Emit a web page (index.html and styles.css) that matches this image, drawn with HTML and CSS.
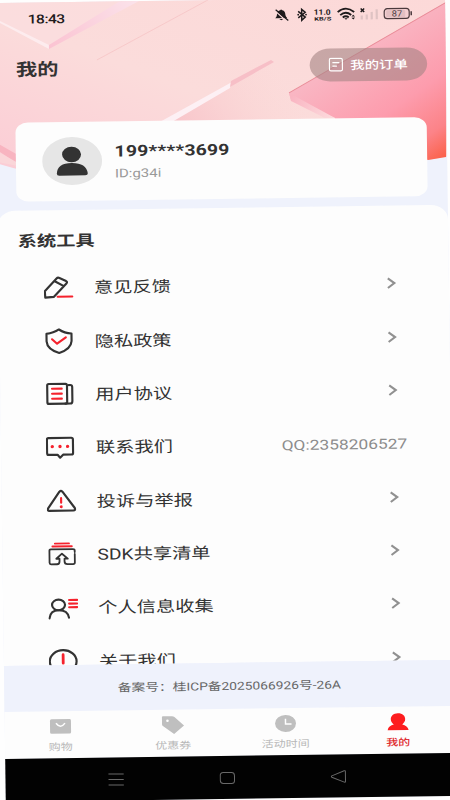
FILE: index.html
```html
<!DOCTYPE html>
<html lang="zh-CN">
<head>
<meta charset="utf-8">
<title>我的</title>
<link rel="stylesheet" href="styles.css">
</head>
<body>
<div class="screen">
  <svg class="art" viewBox="0 0 360 166" preserveAspectRatio="none" aria-hidden="true">
    <defs>
      <linearGradient id="base" x1="0" y1="1" x2="1" y2="0"><stop offset="0" stop-color="#fbccd5"/><stop offset=".45" stop-color="#fbdcdb"/><stop offset="1" stop-color="#fcd9d8"/></linearGradient>
      <linearGradient id="wedge" gradientUnits="userSpaceOnUse" x1="355" y1="50" x2="435" y2="165"><stop offset="0" stop-color="#f9b6c3"/><stop offset=".5" stop-color="#fd9cad"/><stop offset=".8" stop-color="#fc8388"/><stop offset="1" stop-color="#fb6048"/></linearGradient>
      <linearGradient id="fold" gradientUnits="userSpaceOnUse" x1="180" y1="125" x2="275" y2="65"><stop offset="0" stop-color="#f8c6cb"/><stop offset="1" stop-color="#fbd5d4" stop-opacity="0"/></linearGradient>
      <linearGradient id="ray" gradientUnits="userSpaceOnUse" x1="49" y1="47" x2="135" y2="0"><stop offset="0" stop-color="#fbc3d2"/><stop offset="1" stop-color="#fbe2ea"/></linearGradient>
      <linearGradient id="edge" gradientUnits="userSpaceOnUse" x1="291" y1="98" x2="335" y2="118"><stop offset="0" stop-color="#f9b5c2"/><stop offset="1" stop-color="#fddcde"/></linearGradient>
    </defs>
    <g transform="matrix(.8 .0135 -.0108 1 4 -3)">
      <path d="M-8 0H450V156L428 160L330 170H20L-8 162Z" fill="url(#base)"/>
      <path d="M0 22L49 47L125 0H-5Z" fill="#fcdedf" opacity=".6"/>
      <path d="M0 21L49 45V49L0 23Z" fill="#fdecee"/>
      <path d="M49 45L120 1H139L49 49Z" fill="url(#ray)"/>
      <path d="M97 60L208 0" stroke="#f6c4c5" stroke-width=".8"/>
      <path d="M172 121L230 87L271 62L300 62L289 93L335 119V125H170Z" fill="url(#fold)"/>
      <path d="M158 123L232 82L230 88L172 122Z" fill="#fdf0f4"/>
      <path d="M231 81L271 60L274 62L230 87Z" fill="#f7bfc7"/>
      <path d="M289 93L446 2V157L428 160L335 125V118L291 100Z" fill="url(#wedge)"/>
      <path d="M289 93L335 118H325L291 101Z" fill="url(#edge)"/>
      <path d="M289 93L446 2.500" stroke="#e98b97" stroke-width="1"/>
      <path d="M-3 143L18 155V164L-3 150Z" fill="#f8b4c0"/>
      <path d="M-3 151L18 163V166L-3 162Z" fill="#fad6d9"/>
    </g>
  </svg>

  <div class="status">
    <span class="clock">18:43</span>
    <svg class="status-icons" viewBox="0 0 145 22" preserveAspectRatio="none">
      <g fill="#1f1b1c">
        <path d="M5 15C7 13.500 6.500 11.500 7 10C7.500 8 9 7.500 10 7.200Q11 5.800 12 7.200C13.500 7.500 14.800 8.500 15 10.500C15.200 12.500 15.500 13.500 17 15ZM9 15.800H13L11 17.200Z"/>
        <path d="M5.500 8L15.500 17.500" stroke="#fadada" stroke-width="1.200"/>
        <path d="M5.500 6.500L18 17.500" stroke="#1f1b1c" stroke-width="1.300"/>
        <path d="M28 8.500L35 14.300L31.500 17.500V6.500L35 9.500L28 15" fill="none" stroke="#1f1b1c" stroke-width="1.500"/>
        <circle cx="28" cy="11.800" r=".9"/><circle cx="35.800" cy="11.800" r=".9"/>
        <text class="speed" x="43.500" y="12.200" textLength="17" lengthAdjust="spacingAndGlyphs">11.0</text>
        <text class="unit" x="44" y="18" textLength="17" lengthAdjust="spacingAndGlyphs">KB/S</text>
        <path d="M67.500 9.800Q75.500 3 84 9.800M70 12.800Q75.500 8.300 81 12.800M72.500 15.200Q75.500 13 78.500 15.200" fill="none" stroke="#1f1b1c" stroke-width="1.900"/>
        <path d="M74 16H77.500L75.700 17.500ZM81.200 14.300L83 12.500L84.800 14.300ZM81.200 15.500L83 17.300L84.800 15.500Z"/>
        <path d="M90.500 6.500L94 10M94 6.500L90.500 10" stroke="#1f1b1c" stroke-width="1.500"/>
      </g>
      <path d="M91.500 13.500V17.500M96.500 12.500V17.500M101.500 10V17.500M106.500 7.500V17.500" stroke="#dfc3c3" stroke-width="2.200"/>
      <rect x="114" y="7" width="25" height="10" rx="3" fill="#f4cfd1" stroke="#4b3a3d" stroke-width="1.200"/>
      <rect x="116" y="8.500" width="19" height="7" rx="1" fill="#e3bfc2"/>
      <path d="M141 10V14" stroke="#4b3a3d" stroke-width="1.500"/>
      <text class="charge" x="121.500" y="15" textLength="10.500" lengthAdjust="spacingAndGlyphs">87</text>
    </svg>
  </div>

  <header class="title-row">
    <h1>我的</h1>
    <a class="orders">
      <svg class="orders-icon" viewBox="0 0 15 15" preserveAspectRatio="none"><rect x="1" y="1" width="13" height="12.500" rx="1.500"/><path d="M4 5.200H11M4 8.800H8.500"/></svg>
      <span>我的订单</span>
    </a>
  </header>

  <section class="profile">
    <svg class="avatar" viewBox="0 0 60 48" preserveAspectRatio="none"><ellipse cx="30" cy="24" rx="30" ry="24" fill="#e6e6e6"/><ellipse cx="29.500" cy="17.500" rx="9.500" ry="7.800" fill="#333"/><path d="M14.500 36.500Q15 26 29.500 26T45.500 36.500Q45.500 38.500 43 38.500H17Q14.500 38.500 14.500 36.500Z" fill="#333"/></svg>
    <div class="who">
      <strong>199****3699</strong>
      <span>ID:g34i</span>
    </div>
  </section>

  <main class="panel">
    <h2>系统工具</h2>
    <ul>
      <li><svg class="icon" viewBox="0 0 30 30" preserveAspectRatio="none"><path d="M1.300 24.300L.9 17.800L12.800 5.300Q14 4 15.700 4.800L22.300 8Q24 9 22.600 10.400L10 23.600ZM11 8L20 13"/><path class="red" d="M13.700 23.500H28.300"/></svg><span class="label">意见反馈</span><svg class="chev" viewBox="0 0 10 13" preserveAspectRatio="none"><path d="M1.500 1.700L8 6.500L1.500 11.300"/></svg></li>
      <li><svg class="icon" viewBox="0 0 30 30" preserveAspectRatio="none"><path d="M14.500 3.300Q20 7 27 7.500V15Q26.500 23 14.500 26.800Q2.500 23 2 15V7.500Q9 7 14.500 3.300Z"/><path class="red" d="M7.500 13L12.500 17.500L21.300 11.400"/></svg><span class="label">隐私政策</span><svg class="chev" viewBox="0 0 10 13" preserveAspectRatio="none"><path d="M1.500 1.700L8 6.500L1.500 11.300"/></svg></li>
      <li><svg class="icon" viewBox="0 0 30 30" preserveAspectRatio="none"><path d="M23.500 6H25Q27 6 27 8V22Q27 24.500 25 24.500H20"/><rect x="2" y="4.700" width="19.800" height="19.800" rx="1.500"/><path class="red" d="M6.800 9.500H16.500M6.800 14.500H16.500M6.800 19.500H16.500"/></svg><span class="label">用户协议</span><svg class="chev" viewBox="0 0 10 13" preserveAspectRatio="none"><path d="M1.500 1.700L8 6.500L1.500 11.300"/></svg></li>
      <li><svg class="icon" viewBox="0 0 30 30" preserveAspectRatio="none"><path d="M2.500 4.700H25.300Q27 4.700 27 6.200V20Q27 21.500 25.300 21.500H17L14 24.500L11.500 21.500H2.500Q1 21.500 1 20V6.200Q1 4.700 2.500 4.700Z"/><g class="dots"><circle cx="6.300" cy="13.300" r="1.700"/><circle cx="14" cy="13.300" r="1.700"/><circle cx="21.600" cy="13.300" r="1.700"/></g></svg><span class="label">联系我们</span><span class="value">QQ:2358206527</span></li>
      <li><svg class="icon" viewBox="0 0 30 30" preserveAspectRatio="none"><path d="M12.800 5.500Q14.300 4 15.800 5.500L28 22Q28.800 24.500 26.500 24.500H2.500Q.3 24.500 1.300 22Z"/><path class="red" d="M14.400 12V16.500"/><g class="dots"><circle cx="14.400" cy="20.600" r="1.500"/></g></svg><span class="label">投诉与举报</span><svg class="chev" viewBox="0 0 10 13" preserveAspectRatio="none"><path d="M1.500 1.700L8 6.500L1.500 11.300"/></svg></li>
      <li><svg class="icon" viewBox="0 0 30 30" preserveAspectRatio="none"><path class="thin" d="M27.300 13V11.500Q27.300 10 25.500 10H3.500Q2 10 2 11.500V23.500Q2 25 3.500 25H9.500Q12 25 12 22V19.500H8.800L14.500 14.500L20.300 19.500H17V22Q17 25 20 25H25.500Q27.300 25 27.300 23.500V15"/><path class="red thin" d="M7.500 4.300H21.700M5 7.200H24.500"/></svg><span class="label">SDK共享清单</span><svg class="chev" viewBox="0 0 10 13" preserveAspectRatio="none"><path d="M1.500 1.700L8 6.500L1.500 11.300"/></svg></li>
      <li><svg class="icon" viewBox="0 0 30 30" preserveAspectRatio="none"><ellipse cx="10.400" cy="11.700" rx="6.500" ry="5.300"/><path d="M1.200 25Q2 17 10.700 17T20.700 24.500"/><path class="red" d="M21 6.900H29M21 10.500H29M21 14.100H29"/></svg><span class="label">个人信息收集</span><svg class="chev" viewBox="0 0 10 13" preserveAspectRatio="none"><path d="M1.500 1.700L8 6.500L1.500 11.300"/></svg></li>
      <li><svg class="icon" viewBox="0 0 30 30" preserveAspectRatio="none"><ellipse cx="14.300" cy="15.200" rx="13.400" ry="11.200"/><path class="red wide" d="M14.300 8.500V17"/></svg><span class="label">关于我们</span><svg class="chev" viewBox="0 0 10 13" preserveAspectRatio="none"><path d="M1.500 1.700L8 6.500L1.500 11.300"/></svg></li>
    </ul>
  </main>

  <footer class="record">备案号：桂ICP备2025066926号-26A</footer>

  <nav class="tabs">
    <a><svg viewBox="0 0 24 20" preserveAspectRatio="none"><rect x="1.500" y="3" width="21" height="14.500" rx="1.500"/><path class="line" d="M7.500 7Q12 13 16.500 7"/></svg><span>购物</span></a>
    <a><svg viewBox="0 0 24 20" preserveAspectRatio="none"><path d="M1 2.500Q1 1.500 2 1.500H11Q12.500 1.500 13.500 2.200L23 11L13 19.200L1.500 10.800Q1 10.400 1 9.500Z"/><circle cx="6.500" cy="6" r="1.300" fill="#fff"/></svg><span>优惠券</span></a>
    <a><svg viewBox="0 0 24 20" preserveAspectRatio="none"><ellipse cx="12" cy="10.300" rx="10.500" ry="8.500"/><path class="line" d="M12 5.500V10.800H18"/></svg><span>活动时间</span></a>
    <a class="on"><svg viewBox="0 0 24 20" preserveAspectRatio="none"><path d="M12 1.500C16.500 1.500 19.200 4 19.200 7.500C19.200 10 17.800 11.500 16.200 12.800C19.500 13.700 22 15.200 22.500 18.500H1.500C2 15.200 4.500 13.700 7.800 12.800C6.200 11.500 4.800 10 4.800 7.500C4.800 4 7.500 1.500 12 1.500Z"/></svg><span>我的</span></a>
  </nav>

  <div class="system-nav">
    <svg viewBox="0 0 16 14" preserveAspectRatio="none"><path d="M.5 1.500H15.500M.5 7H15.500M.5 12.500H15.500"/></svg>
    <svg viewBox="0 0 16 14" preserveAspectRatio="none"><rect x="1" y="1.500" width="14" height="11" rx="3"/></svg>
    <svg viewBox="0 0 16 14" preserveAspectRatio="none"><path d="M1.300 6.300L13.500 1.300Q14.700 1 14.700 2.200V11.800Q14.700 13 13.500 12.700L1.300 7.700Q.3 7 1.300 6.300Z"/></svg>
  </div>
</div>
</body>
</html>
```
FILE: styles.css
```css
* { box-sizing: border-box; }
html, body { margin: 0; height: 800px; overflow: hidden; background: #fefefe; }
body { font-family: Roboto, "Noto Sans CJK SC", sans-serif; color: #333; }
h1, h2, ul { margin: 0; padding: 0; }

/* A 360-unit wide phone screen, widened and tilted slightly */
.screen {
  position: relative;
  display: flex;
  flex-direction: column;
  width: 360px;
  height: 799px;
  background: #eff2fc;
  transform-origin: 0 0;
  transform: matrix(1.25, -0.017, 0.0135, 1, -5, 3);
}
.art { position: absolute; left: 0; top: 0; width: 360px; height: 166px; }

.status { position: relative; display: flex; justify-content: space-between; height: 32px; padding: 4px 24px 0 26px; }
.clock { font-size: 12.5px; line-height: 25px; font-weight: 500; letter-spacing: -.45px; color: #1f1b1c; }
.status-icons { width: 116px; height: 22px; }
.speed { font-size: 7.500px; font-weight: 700; }
.unit { font-size: 5px; font-weight: 700; }
.charge { font-size: 8.500px; font-weight: 400; fill: #4b3a3d; }

.title-row { position: relative; display: flex; align-items: center; justify-content: space-between; height: 68px; padding: 0 15.500px 0 16px; }
h1 { padding-top: 2px; font-size: 17px; line-height: 24px; font-weight: 700; }
.orders { display: flex; align-items: center; justify-content: center; gap: 6px; width: 94px; height: 33px; border-radius: 17px; background: rgba(165, 132, 132, .6); color: #fff; font-size: 11.500px; font-weight: 500; }
.orders-icon { width: 12px; height: 15px; fill: none; stroke: #fff; stroke-width: 1.200; }

.profile { position: relative; display: flex; align-items: center; gap: 10px; width: 329px; height: 79px; margin: 19.500px 0 0 15px; padding-left: 21px; border-radius: 10px; background: #fdfdfd; }
.avatar { width: 48px; height: 48px; }
.who { display: flex; flex-direction: column; gap: 2px; padding-top: 3px; }
.who strong { font-size: 15.500px; line-height: 20px; font-weight: 700; letter-spacing: .15px; }
.who span { font-size: 12px; line-height: 20px; color: #999; letter-spacing: 0; }

.panel { flex: none; height: 454.700px; margin-top: 9.500px; padding-top: 19px; border-radius: 14px 14px 0 0; background: #fdfdfd; overflow: hidden; }
h2 { padding-left: 15.500px; font-size: 15.400px; line-height: 24px; font-weight: 700; }
ul { list-style: none; padding-top: 8px; }
li { display: flex; align-items: center; height: 53.350px; padding: 0 42px 0 36px; }
.icon { flex: none; width: 24px; height: 30px; fill: none; stroke: #333; stroke-width: 2.150; stroke-linecap: round; stroke-linejoin: round; }
.icon .red { stroke: #f5222d; }
.icon .wide { stroke-width: 2.800; }
.icon .thin { stroke-width: 1.800; }
.dots { fill: #f5222d; stroke: none; }
.label { flex: 1; margin-left: 16px; padding-top: 1.500px; font-size: 15.400px; line-height: 24px; }
.chev { width: 8px; height: 13px; fill: none; stroke: #919191; stroke-width: 2.100; }
.value { margin-right: -7px; font-size: 13.900px; color: #8c8c8c; }

.record { flex: none; height: 46px; padding-left: 0; line-height: 48px; font-size: 11px; color: #666; text-align: center; background: #eff2fc; }

.tabs { display: grid; grid-template-columns: repeat(4, 90px); flex: none; height: 47px; background: #fdfdfd; }
.tabs a { display: flex; flex-direction: column; align-items: center; padding-top: 5.500px; gap: 4px; font-size: 9.600px; line-height: 13px; color: #b8b8b8; }
.tabs a span { margin-left: -1px; }
.tabs svg { width: 19.200px; height: 20px; fill: #bfbfbf; }
.tabs .line { fill: none; stroke: #fff; stroke-width: 1.500; }
.tabs .on { color: #e02a2e; font-weight: 500; }
.tabs .on svg { fill: #fd1d1f; }

.system-nav { display: flex; flex: 1; align-items: center; justify-content: center; gap: 76px; padding: 1px 6px 0 0; background: #020202; }
.system-nav svg { width: 13px; height: 14px; fill: none; stroke: #696969; stroke-width: 1; }
```
